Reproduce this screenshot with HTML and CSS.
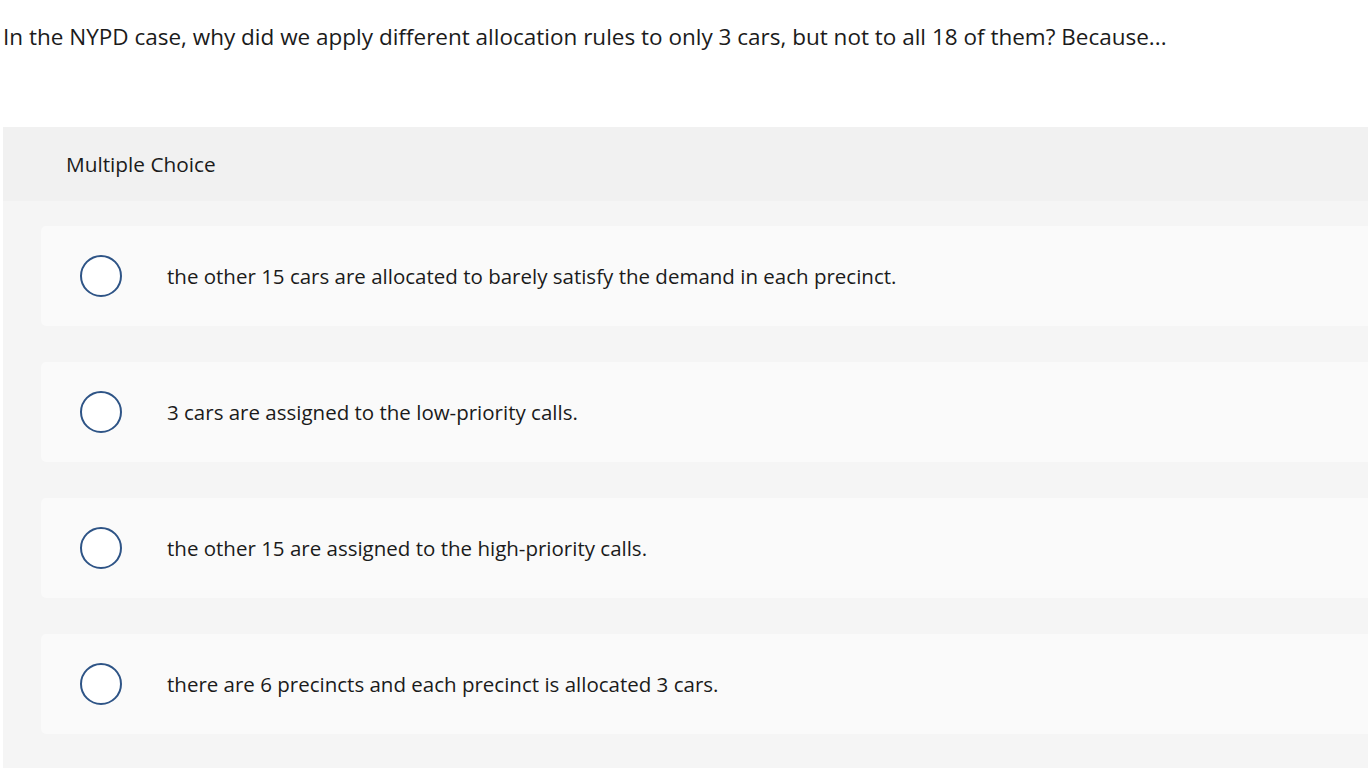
FILE: index.html
```html
<!DOCTYPE html>
<html>
<head>
<meta charset="utf-8">
<link rel="stylesheet" href="styles.css">
</head>
<body>
<div class="page">
  <p class="question">In the NYPD case, why did we apply different allocation rules to only 3 cars, but not to all 18 of them? Because...</p>
  <div class="panel">
    <div class="panel-head">Multiple Choice</div>
    <div class="panel-body">
      <div class="option"><span class="radio"></span><span class="label">the other 15 cars are allocated to barely satisfy the demand in each precinct.</span></div>
      <div class="option"><span class="radio"></span><span class="label">3 cars are assigned to the low-priority calls.</span></div>
      <div class="option"><span class="radio"></span><span class="label">the other 15 are assigned to the high-priority calls.</span></div>
      <div class="option"><span class="radio"></span><span class="label">there are 6 precincts and each precinct is allocated 3 cars.</span></div>
    </div>
  </div>
</div>
</body>
</html>
```
FILE: styles.css
```css
html, body {
  margin: 0;
  padding: 0;
  background: #ffffff;
  overflow: hidden;
}
.page {
  padding-left: 3px;
  width: 1420px;
  font-family: "Open Sans", "Liberation Sans", sans-serif;
  color: #1b1b1b;
}
.question {
  margin: 0;
  padding-top: 21px;
  height: 127px;
  box-sizing: border-box;
  font-size: 22.5px;
  line-height: 32px;
}
.panel {
  background: #f5f5f5;
}
.panel-head {
  background: #f1f1f1;
  height: 74px;
  box-sizing: border-box;
  padding-left: 63px;
  display: flex;
  align-items: center;
  font-size: 20.8px;
}
.panel-body {
  padding: 25px 0 60px 38px;
  display: flex;
  flex-direction: column;
  gap: 36px;
}
.option {
  background: #fafafa;
  border-radius: 5px;
  height: 100px;
  display: flex;
  align-items: center;
  padding-left: 39px;
}
.radio {
  width: 38px;
  height: 38px;
  border: 2px solid #2e5486;
  border-radius: 50%;
  background: #ffffff;
  flex: none;
}
.label {
  margin-left: 45px;
  font-size: 20.5px;
}
```
